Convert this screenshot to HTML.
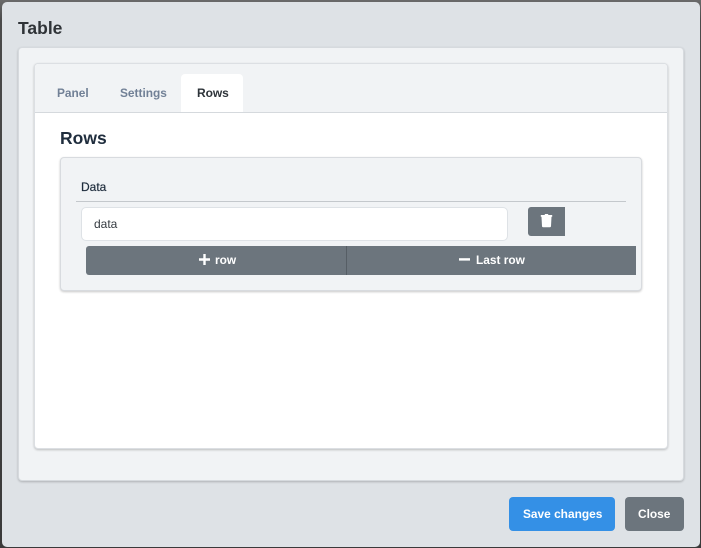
<!DOCTYPE html>
<html>
<head>
<meta charset="utf-8">
<style>
html,body{margin:0;padding:0;width:701px;height:548px;overflow:hidden;background:#555;font-family:"Liberation Sans",sans-serif}
div,span,svg{position:absolute;box-sizing:border-box}
.t{white-space:nowrap;font-weight:bold;font-size:12px;line-height:14px}
</style>
</head>
<body>
<div style="left:0;top:0;width:701px;height:548px;background:linear-gradient(#6a6a6a,#4a4a4a 20px,#3a3a3a)"></div>
<div style="left:2px;top:2px;width:698px;height:545px;background:#dee2e6;border-radius:5px"></div>
<div class="t" style="left:18px;top:18px;font-size:17.5px;line-height:20px;color:#2f3337">Table</div>

<div style="left:18px;top:47px;width:666px;height:434px;background:#f1f3f5;border:1px solid #d6dade;border-radius:4px;box-shadow:0 1px 2px rgba(0,0,0,.22)"></div>
<div style="left:34px;top:63px;width:634px;height:386px;background:#fff;border:1px solid #dcdfe3;border-radius:4px;box-shadow:0 1px 2px rgba(0,0,0,.22)"></div>
<div style="left:35px;top:64px;width:632px;height:49px;background:#f1f3f5;border-bottom:1px solid #d5d9dd;border-radius:3px 3px 0 0"></div>
<div style="left:181px;top:74px;width:62px;height:38px;background:#fff;border-radius:4px 4px 0 0"></div>
<div class="t" style="left:57px;top:86px;color:#718096;font-size:11.9px">Panel</div>
<div class="t" style="left:120px;top:86px;color:#718096;font-size:11.9px">Settings</div>
<div class="t" style="left:197px;top:86px;color:#2d3339;letter-spacing:-.07px">Rows</div>
<div class="t" style="left:60px;top:128px;font-size:17.5px;line-height:21px;color:#1f2d3d">Rows</div>

<div style="left:60px;top:157px;width:582px;height:134px;background:#f1f3f5;border:1px solid #d8dbdf;border-radius:4px;box-shadow:0 1px 2px rgba(0,0,0,.22)"></div>
<div style="left:81px;top:180px;font-size:12px;line-height:14px;color:#1f2d3d;white-space:nowrap;-webkit-text-stroke:.2px #1f2d3d">Data</div>
<div style="left:76px;top:201px;width:550px;height:1px;background:#c4c8cc"></div>
<div style="left:81px;top:207px;width:427px;height:34px;background:#fff;border:1px solid #dee2e6;border-radius:5px"></div>
<div style="left:94px;top:217px;font-size:12px;line-height:14px;color:#343a40;white-space:nowrap">data</div>

<div style="left:528px;top:207px;width:37px;height:29px;background:#6c757d;border-radius:3px 0 0 3px"></div>
<svg style="left:540px;top:213px" width="13" height="15" viewBox="0 0 13 15"><path d="M0.8 2H4.6L5 1H8L8.4 2H12.2V3.8H0.8Z M1.5 3.8H11.5L11 13.2Q10.9 14.2 9.9 14.2H3.1Q2.1 14.2 2 13.2Z" fill="#fff"/></svg>

<div style="left:86px;top:246px;width:550px;height:29px;background:#6c757d;border-radius:3px 0 0 3px"></div>
<div style="left:346px;top:246px;width:1px;height:29px;background:#565e65"></div>
<svg style="left:199px;top:254px" width="11" height="11" viewBox="0 0 11 11"><path d="M4.3 0H6.7V4.3H11V6.7H6.7V11H4.3V6.7H0V4.3H4.3Z" fill="#fff"/></svg>
<div class="t" style="left:215px;top:253px;color:#fff;font-size:11.9px">row</div>
<svg style="left:459px;top:254px" width="11" height="11" viewBox="0 0 11 11"><rect x="0" y="4.2" width="11" height="2.4" fill="#fff"/></svg>
<div class="t" style="left:476px;top:253px;color:#fff;font-size:11.9px">Last row</div>

<div style="left:509px;top:497px;width:106px;height:34px;background:#3490e6;border-radius:4px"></div>
<div class="t" style="left:523px;top:507px;color:#fff;font-size:11.9px">Save changes</div>
<div style="left:625px;top:497px;width:59px;height:34px;background:#6c757d;border-radius:4px"></div>
<div class="t" style="left:638px;top:507px;color:#fff;font-size:11.9px">Close</div>
</body>
</html>
